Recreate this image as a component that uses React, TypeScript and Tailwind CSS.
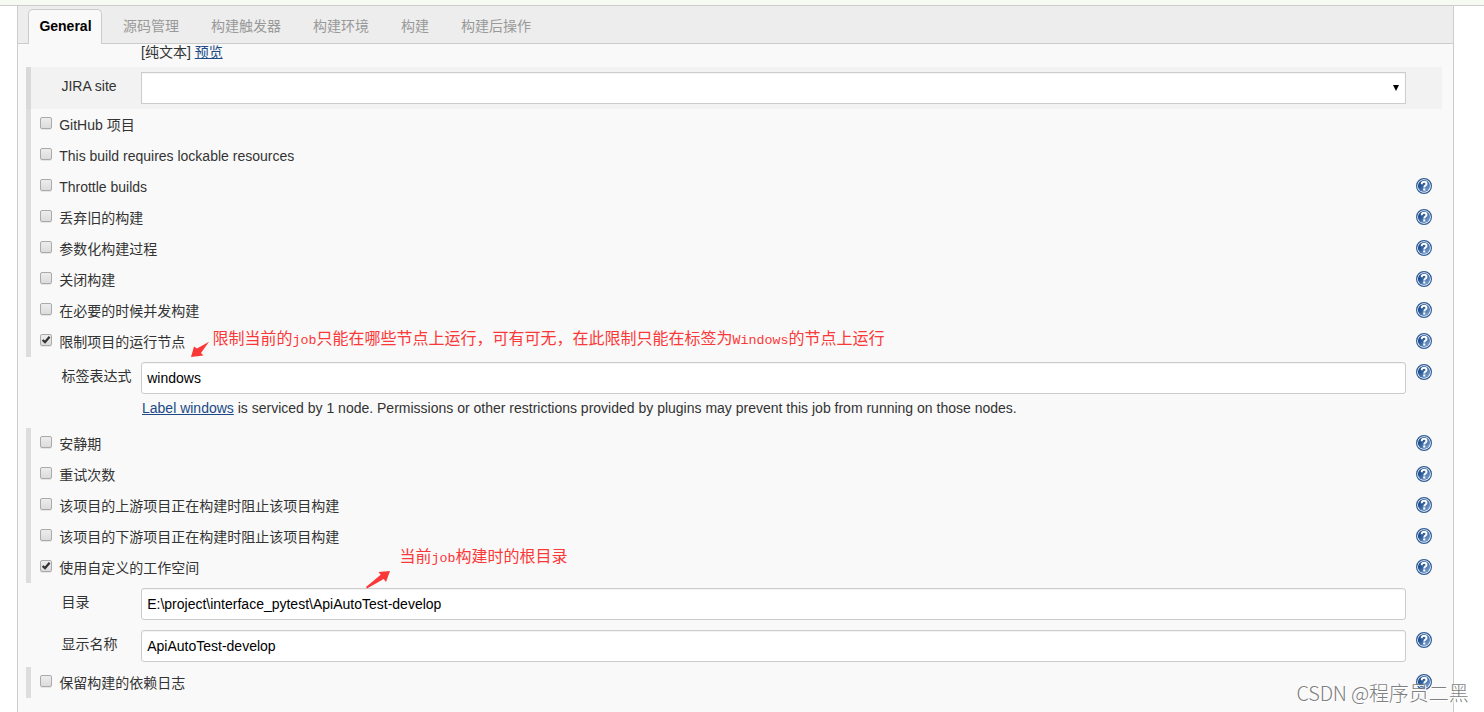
import type { ReactNode } from "react";
import clsx from "clsx";

const tabs = ["源码管理", "构建触发器", "构建环境", "构建", "构建后操作"];

const generalOptions = [
  { label: "GitHub 项目", help: false, checked: false },
  { label: "This build requires lockable resources", help: false, checked: false },
  { label: "Throttle builds", help: true, checked: false },
  { label: "丢弃旧的构建", help: true, checked: false },
  { label: "参数化构建过程", help: true, checked: false },
  { label: "关闭构建", help: true, checked: false },
  { label: "在必要的时候并发构建", help: true, checked: false },
  { label: "限制项目的运行节点", help: true, checked: true },
];

const advancedOptions = [
  { label: "安静期", help: true, checked: false },
  { label: "重试次数", help: true, checked: false },
  { label: "该项目的上游项目正在构建时阻止该项目构建", help: true, checked: false },
  { label: "该项目的下游项目正在构建时阻止该项目构建", help: true, checked: false },
  { label: "使用自定义的工作空间", help: true, checked: true },
];

function HelpIcon() {
  return (
    <svg width="16" height="16" viewBox="0 0 16 16" className="block">
      <defs>
        <linearGradient id="help" x1="0" y1="0" x2="1" y2="1">
          <stop offset="0.3" stopColor="#20508f" />
          <stop offset="1" stopColor="#8db1dc" />
        </linearGradient>
      </defs>
      <circle cx="8" cy="8" r="7.4" fill="#fff" stroke="#2f5b98" strokeWidth="1.2" />
      <circle cx="8" cy="8" r="6.1" fill="url(#help)" />
      <path d="M5.7 6.2C5.7 4.3 6.8 3.8 8.1 3.8s2.4.7 2.4 2.1c0 1.7-2.2 1.6-2.2 3.5" fill="none" stroke="#fff" strokeWidth="2" />
      <rect x="7.2" y="10.4" width="2.1" height="2.1" fill="#fff" />
    </svg>
  );
}

function Checkbox({ checked }: { checked: boolean }) {
  return (
    <span className="mt-2 h-3 w-3 shrink-0 rounded-[2px] border border-[#aaa] bg-linear-to-b from-[#ededed] to-[#dcdcdc] shadow-[0_1px_0_rgba(0,0,0,0.08)]">
      {checked && (
        <svg width="10" height="10" viewBox="0 0 10 10" className="block">
          <path d="M1.6 5 4 7.2 8.6 1.8" fill="none" stroke="#333" strokeWidth="2.3" />
        </svg>
      )}
    </span>
  );
}

function OptionRow({ label, help, checked }: { label: string; help: boolean; checked: boolean }) {
  return (
    <div className="flex h-[31px] border-l-[5px] border-[#ddd] pr-[10px] pl-[9px]">
      <Checkbox checked={checked} />
      <span className="ml-[7.2px] flex-1 pt-1.5 leading-5">{label}</span>
      {help && <div className="pt-[7px]"><HelpIcon /></div>}
    </div>
  );
}

function FieldRow({ label, help, shaded, children }: { label: string; help?: boolean; shaded?: boolean; children: ReactNode }) {
  return (
    <div className={clsx("flex h-[42px] border-l-[5px] pr-[10px] pl-[30px]", shaded ? "border-[#d9d9d9] bg-[#f2f2f2]" : "border-transparent")}>
      <div className="w-20 shrink-0 pt-[9px] pl-[0.4px] leading-5">{label}</div>
      <div className="mr-[10px] flex-1 pt-[5px]">{children}</div>
      <div className="w-4 pt-[7px]">{help && <HelpIcon />}</div>
    </div>
  );
}

function TextField({ value }: { value: string }) {
  return (
    <div className="h-8 rounded-[3px] border border-[#ccc] bg-white px-[5.2px] leading-[31px] text-black shadow-[inset_0_1px_1px_rgba(0,0,0,0.05)]">
      {value}
    </div>
  );
}

function Note({ className, children }: { className: string; children: ReactNode }) {
  return (
    <div className={clsx("absolute text-[16px] leading-6 whitespace-nowrap text-[#fb3838]", className)}>
      {children}
    </div>
  );
}

function Mono({ children }: { children: ReactNode }) {
  return <span className="font-['Liberation_Mono',monospace] text-[13.33px]">{children}</span>;
}

export default function App() {
  return (
    <div className="relative h-[712px] w-[1484px] overflow-hidden bg-white font-['Liberation_Sans','Noto_Sans_CJK_SC',sans-serif] text-[14px] text-[#333]">
      <div className="h-1.5 border-b border-[#ccc] bg-[#f7faf2]" />
      <div className="ml-[17px] h-[706px] w-[1437px] border-x border-[#ccc] bg-[#f9f9f9]">
        <div className="flex h-[38px] border-b border-[#ccc] bg-[#ededed] pt-[3px] pl-[9px]">
          <div className="-mb-px ml-px h-[35px] w-[74px] rounded-t-[5px] border border-b-0 border-[#ccc] bg-[#f9f9f9] pl-[10.4px] leading-[33px] font-bold text-black">
            General
          </div>
          <div className="flex gap-8 pl-[21px] leading-[35px] text-[#999]">
            {tabs.map((tab) => (
              <span key={tab}>{tab}</span>
            ))}
          </div>
        </div>

        <div className="mr-[11px] ml-2">
          <div className="h-[23px] pl-[115px] leading-[17px]">
            [纯文本] <a className="text-[#204a87] underline">预览</a>
          </div>
          <FieldRow label="JIRA site" shaded>
            <div className="flex h-8 items-center justify-end border border-[#ccc] bg-white pr-1.5 shadow-[inset_0_1px_1px_rgba(0,0,0,0.05)]">
              <svg width="6" height="6" viewBox="0 0 6 6">
                <path d="M0 0h6L3 6z" fill="#000" />
              </svg>
            </div>
          </FieldRow>
          {generalOptions.map((option) => (
            <OptionRow key={option.label} {...option} />
          ))}
          <FieldRow label="标签表达式" help>
            <TextField value="windows" />
          </FieldRow>
          <div className="h-[29px] pl-[116px] leading-[18px]">
            <a className="text-[#204a87] underline">Label windows</a> is serviced by 1 node. Permissions or other
            restrictions provided by plugins may prevent this job from running on those nodes.
          </div>
          {advancedOptions.map((option) => (
            <OptionRow key={option.label} {...option} />
          ))}
          <FieldRow label="目录">
            <TextField value="E:\project\interface_pytest\ApiAutoTest-develop" />
          </FieldRow>
          <FieldRow label="显示名称" help>
            <TextField value="ApiAutoTest-develop" />
          </FieldRow>
          <OptionRow label="保留构建的依赖日志" help checked={false} />
        </div>
      </div>

      {/* Red annotations with their arrows */}
      <Note className="top-[327px] left-[212.5px]">
        限制当前的<Mono>job</Mono>只能在哪些节点上运行，可有可无，在此限制只能在标签为<Mono>Windows</Mono>的节点上运行
      </Note>
      <svg width="20" height="18" viewBox="0 0 20 18" className="absolute top-[341px] left-[190px]">
        <path d="M1 16 4 5.5 7 7.5 19 0.8 11 12 13.5 14.5z" fill="#fb3838" />
      </svg>
      <Note className="top-[545px] left-[399.5px]">
        当前<Mono>job</Mono>构建时的根目录
      </Note>
      <svg width="26" height="19" viewBox="0 0 26 19" className="absolute top-[570px] left-[366px]">
        <path d="M24 1 12.5 2 14.7 4.8 0 17 1 18.4 17.7 9 20 12z" fill="#fb3838" />
      </svg>

      {/* Watermark */}
      <div className="absolute top-[679px] left-[1296.5px] font-['Noto_Sans_CJK_SC',sans-serif] text-[20px] leading-7 font-light whitespace-nowrap text-[#6f6f6f]/90 [text-shadow:1px_1px_0_#fff]">
        <span className="tracking-[-0.25px]">CSDN @</span>程序员二黑
      </div>
    </div>
  );
}
